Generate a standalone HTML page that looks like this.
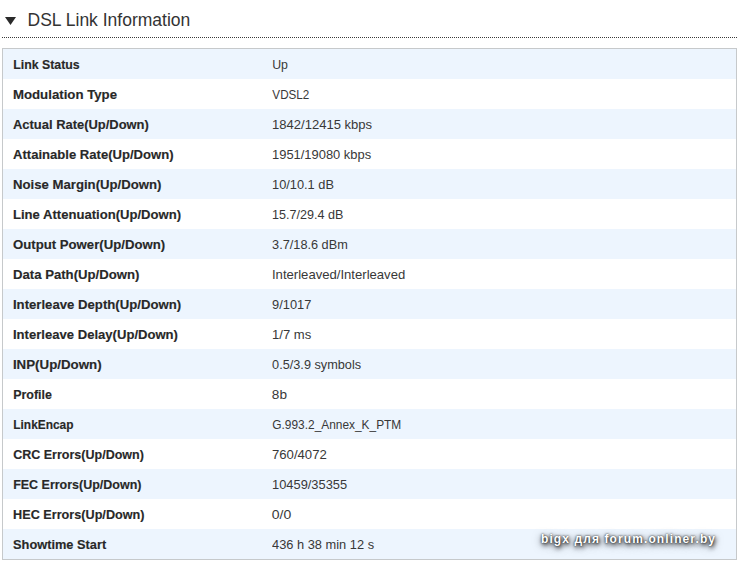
<!DOCTYPE html>
<html><head><meta charset="utf-8"><style>
html,body{margin:0;padding:0;background:#fff;width:739px;height:562px;overflow:hidden;position:relative;font-family:"Liberation Sans",sans-serif;}
.tri{position:absolute;left:0;top:0;}
.h{position:absolute;left:27.5px;top:8px;font-size:17.5px;color:#333;line-height:24px;white-space:nowrap;}
.dot{position:absolute;left:2px;top:37px;width:735px;height:1px;background:repeating-linear-gradient(90deg,#3a3a3a 0 1px,transparent 1px 2px);}
.t{position:absolute;left:2px;top:48px;width:733px;height:510px;border:1px solid #c6c9cb;}
.r{position:relative;height:30px;background:#fff;}
.r.o{background:#edf5fe;}
.l{position:absolute;left:9.5px;top:1px;line-height:30px;font-size:13px;font-weight:bold;color:#282828;white-space:nowrap;transform-origin:3.5px 0;-webkit-text-stroke:0.15px #282828;}
.v{position:absolute;left:268.5px;top:1px;line-height:30px;font-size:13px;color:#383838;white-space:nowrap;transform-origin:3.5px 0;}
.wm{position:absolute;left:541px;top:531px;font-size:12px;line-height:16px;letter-spacing:1.1px;font-weight:bold;color:#fff;text-shadow:0 0 2px rgba(0,0,0,.9),1px 2px 4px rgba(0,0,0,.9),0 2px 8px rgba(0,0,0,.6);white-space:nowrap;}
</style></head><body>
<svg class="tri" width="20" height="30"><polygon points="5,17 16,17 10.5,25" fill="#2a2a2a"/></svg>
<div class="h">DSL Link Information</div>
<div class="dot"></div>
<div class="t">
<div class="r o"><span class="l" style="transform:scaleX(0.9493)">Link Status</span><span class="v" style="transform:scaleX(0.95)">Up</span></div>
<div class="r"><span class="l" style="transform:scaleX(1.0178)">Modulation Type</span><span class="v" style="transform:scaleX(0.8975)">VDSL2</span></div>
<div class="r o"><span class="l" style="transform:scaleX(0.9949)">Actual Rate(Up/Down)</span><span class="v" style="transform:scaleX(1.004)">1842/12415 kbps</span></div>
<div class="r"><span class="l" style="transform:scaleX(1.0057)">Attainable Rate(Up/Down)</span><span class="v" style="transform:scaleX(0.9939)">1951/19080 kbps</span></div>
<div class="r o"><span class="l" style="transform:scaleX(1.013)">Noise Margin(Up/Down)</span><span class="v" style="transform:scaleX(0.9839)">10/10.1 dB</span></div>
<div class="r"><span class="l" style="transform:scaleX(1.006)">Line Attenuation(Up/Down)</span><span class="v" style="transform:scaleX(0.9671)">15.7/29.4 dB</span></div>
<div class="r o"><span class="l" style="transform:scaleX(1.0134)">Output Power(Up/Down)</span><span class="v" style="transform:scaleX(0.9789)">3.7/18.6 dBm</span></div>
<div class="r"><span class="l" style="transform:scaleX(1.0121)">Data Path(Up/Down)</span><span class="v" style="transform:scaleX(1.0076)">Interleaved/Interleaved</span></div>
<div class="r o"><span class="l" style="transform:scaleX(1.0121)">Interleave Depth(Up/Down)</span><span class="v" style="transform:scaleX(0.9897)">9/1017</span></div>
<div class="r"><span class="l" style="transform:scaleX(1.0061)">Interleave Delay(Up/Down)</span><span class="v" style="transform:scaleX(1.0053)">1/7 ms</span></div>
<div class="r o"><span class="l" style="transform:scaleX(1.0233)">INP(Up/Down)</span><span class="v" style="transform:scaleX(0.9778)">0.5/3.9 symbols</span></div>
<div class="r"><span class="l" style="transform:scaleX(0.9575)">Profile</span><span class="v" style="transform:scaleX(1.0462)">8b</span></div>
<div class="r o"><span class="l" style="transform:scaleX(0.9154)">LinkEncap</span><span class="v" style="transform:scaleX(0.9151)">G.993.2_Annex_K_PTM</span></div>
<div class="r"><span class="l" style="transform:scaleX(0.963)">CRC Errors(Up/Down)</span><span class="v" style="transform:scaleX(1.0113)">760/4072</span></div>
<div class="r o"><span class="l" style="transform:scaleX(0.9602)">FEC Errors(Up/Down)</span><span class="v" style="transform:scaleX(0.9893)">10459/35355</span></div>
<div class="r"><span class="l" style="transform:scaleX(0.9731)">HEC Errors(Up/Down)</span><span class="v" style="transform:scaleX(1.0765)">0/0</span></div>
<div class="r o"><span class="l" style="transform:scaleX(0.984)">Showtime Start</span><span class="v" style="transform:scaleX(0.9873)">436 h 38 min 12 s</span></div>
</div>
<div class="wm">bigx для forum.onliner.by</div>
</body></html>
